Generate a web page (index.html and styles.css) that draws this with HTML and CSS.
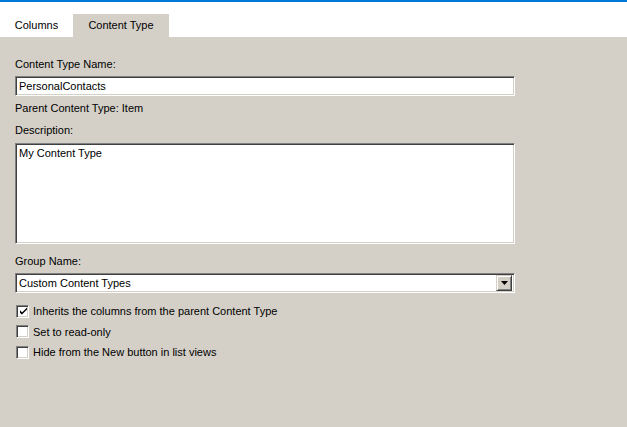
FILE: index.html
```html
<!DOCTYPE html>
<html>
<head>
<meta charset="utf-8">
<link rel="stylesheet" href="styles.css">
</head>
<body>
<div class="window">
  <div class="tabbar">
    <div class="tab">Columns</div>
    <div class="tab active">Content Type</div>
  </div>
  <div class="panel">
    <div class="label first">Content Type Name:</div>
    <div class="field input">PersonalContacts</div>
    <div class="label parent">Parent Content Type: Item</div>
    <div class="label desc">Description:</div>
    <div class="field textarea">My Content Type</div>
    <div class="label group">Group Name:</div>
    <div class="field select">
      <span class="select-text">Custom Content Types</span>
      <span class="drop">
        <svg width="7" height="4" viewBox="0 0 7 4"><path d="M0 0h7L3.5 4z" fill="#000"/></svg>
      </span>
    </div>
    <div class="checks">
      <div class="check">
        <span class="box">
          <svg width="9" height="9" viewBox="0 0 9 9"><path d="M1 3.5l2 2 5-5v2l-5 5-2-2z" fill="#000"/><path d="M1 3.5v2l2 2v-2z" fill="#000"/></svg>
        </span>
        <span>Inherits the columns from the parent Content Type</span>
      </div>
      <div class="check"><span class="box"></span><span>Set to read-only</span></div>
      <div class="check"><span class="box"></span><span>Hide from the New button in list views</span></div>
    </div>
  </div>
</div>
</body>
</html>
```
FILE: styles.css
```css
* { box-sizing: border-box; }
html, body { margin: 0; padding: 0; height: 100%; }
body {
  font-family: "Liberation Sans", Arial, sans-serif;
  font-size: 11px;
  color: #000;
  background: #d4d0c8;
}
.window { display: flex; flex-direction: column; height: 100%; border-top: 2px solid #0078d7; }
.tabbar {
  height: 35px;
  background: #fff;
  display: flex;
  align-items: flex-end;
}
.tab {
  height: 23px;
  display: flex;
  align-items: center;
  justify-content: center;
  width: 73px;
  padding-bottom: 1px;
}
.tab.active { width: 96px; background: #d4d0c8; }
.panel {
  flex: 1;
  background: #d4d0c8;
  padding: 20px 0 0 15px;
}
.label { line-height: 14px; height: 14px; }
.parent { margin-top: 5px; }
.desc { margin-top: 8px; }
.group { margin-top: 10px; }
.field {
  width: 500px;
  background: #fff;
  border-style: solid;
  border-width: 1px;
  border-color: #808080 #fff #fff #808080;
  box-shadow: inset 1px 1px 0 #404040, inset -1px -1px 0 #d4d0c8;
  margin-top: 5px;
  padding: 0 3px;
}
.input { height: 20px; line-height: 18px; }
.textarea { height: 101px; margin-top: 6px; padding-top: 2px; line-height: 14px; }
.select { height: 20px; display: flex; align-items: center; padding: 2px 2px 2px 3px; }
.select-text { flex: 1; }
.drop {
  width: 16px;
  height: 16px;
  background: #d4d0c8;
  border-style: solid;
  border-width: 1px;
  border-color: #d4d0c8 #404040 #404040 #d4d0c8;
  box-shadow: inset 1px 1px 0 #fff, inset -1px -1px 0 #808080;
  display: flex;
  align-items: center;
  justify-content: center;
}
.checks { margin-top: 8px; margin-left: 1px; }
.check { height: 20.5px; display: flex; align-items: center; gap: 4px; }
.box {
  width: 13px;
  height: 13px;
  background: #fff;
  border-style: solid;
  border-width: 1px;
  border-color: #808080 #fff #fff #808080;
  box-shadow: inset 1px 1px 0 #404040, inset -1px -1px 0 #d4d0c8;
  display: flex;
  align-items: center;
  justify-content: center;
}
.box svg { display: block; margin: 0 0 0 1px; }
```
